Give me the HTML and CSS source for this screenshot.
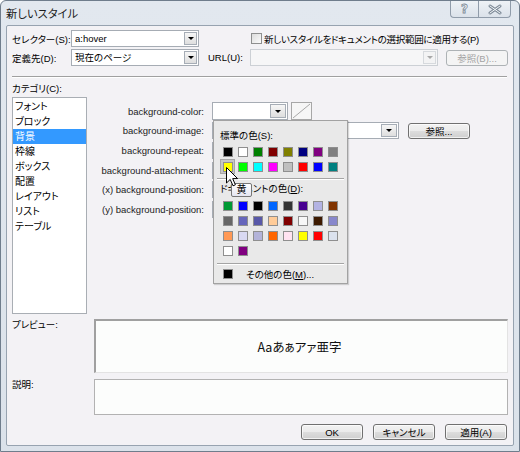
FILE: index.html
```html
<!DOCTYPE html>
<html lang="ja">
<head>
<meta charset="utf-8">
<link rel="stylesheet" href="styles.css">
</head>
<body>
<div class="win">
  <div class="titlebar">
    <span class="title">新しいスタイル</span>
    <div class="caps">
      <span class="cap help">?</span>
      <span class="cap close"><svg width="14" height="11" viewBox="0 0 14 11"><path d="M2 2 L12 9 M12 2 L2 9" stroke="#7e8b98" stroke-width="3" stroke-linecap="round"/><path d="M2 2 L12 9 M12 2 L2 9" stroke="#f4f7fa" stroke-width="1" stroke-linecap="round"/></svg></span>
    </div>
  </div>
  <div class="client">
    <div class="row r1">
      <span class="lbl">セレクター(S):</span>
      <div class="sel w128"><span class="val">a:hover</span><span class="dd"></span></div>
      <span class="chk"></span>
      <span class="chklbl">新しいスタイルをドキュメントの選択範囲に適用する(P)</span>
    </div>
    <div class="row r2">
      <span class="lbl">定義先(D):</span>
      <div class="sel w128"><span class="val">現在のページ</span><span class="dd"></span></div>
      <span class="url">URL(U):</span>
      <div class="sel dis w188"><span class="val"></span><span class="dd"></span></div>
      <span class="btn dis b62">参照(B)...</span>
    </div>
    <div class="sep"></div>
    <div class="catlbl">カテゴリ(C):</div>
    <div class="main">
      <ul class="cats">
        <li>フォント</li>
        <li>ブロック</li>
        <li class="on">背景</li>
        <li>枠線</li>
        <li>ボックス</li>
        <li>配置</li>
        <li>レイアウト</li>
        <li>リスト</li>
        <li>テーブル</li>
      </ul>
      <div class="props">
        <div class="prow"><span class="plbl">background-color:</span><div class="sel w76 h18"><span class="val"></span><span class="dd big"></span></div><span class="nonebtn"><svg width="19" height="16" viewBox="0 0 19 16"><path d="M1 15 L18 1" stroke="#a8a8a8" stroke-width="1"/></svg></span></div>
        <div class="prow"><span class="plbl">background-image:</span><div class="sel w187"><span class="val"></span><span class="dd big"></span></div><span class="btn b62 ml9">参照...</span></div>
        <div class="prow"><span class="plbl">background-repeat:</span><div class="sel w110"><span class="val"></span><span class="dd"></span></div></div>
        <div class="prow"><span class="plbl">background-attachment:</span><div class="sel w110"><span class="val"></span><span class="dd"></span></div></div>
        <div class="prow"><span class="plbl">(x) background-position:</span><div class="sel w110"><span class="val"></span><span class="dd"></span></div></div>
        <div class="prow"><span class="plbl">(y) background-position:</span><div class="sel w110"><span class="val"></span><span class="dd"></span></div></div>
      </div>
    </div>
    <div class="brow prev">
      <span class="blbl">プレビュー:</span>
      <div class="pbox"><span class="ptext">Aaあぁアァ亜字</span></div>
    </div>
    <div class="brow desc">
      <span class="blbl">説明:</span>
      <div class="dbox"></div>
    </div>
    <div class="buttons">
      <span class="btn b62">OK</span>
      <span class="btn b62">キャンセル</span>
      <span class="btn b62">適用(A)</span>
    </div>
  </div>

  <div class="popup">
    <div class="ph">標準の色(S):</div>
    <div class="grid">
      <span class="cell"><i style="background:#000000"></i></span>
      <span class="cell"><i style="background:#ffffff"></i></span>
      <span class="cell"><i style="background:#008000"></i></span>
      <span class="cell"><i style="background:#800000"></i></span>
      <span class="cell"><i style="background:#808000"></i></span>
      <span class="cell"><i style="background:#000080"></i></span>
      <span class="cell"><i style="background:#800080"></i></span>
      <span class="cell"><i style="background:#808080"></i></span>
      <span class="cell hov"><i style="background:#ffff00"></i></span>
      <span class="cell"><i style="background:#00ff00"></i></span>
      <span class="cell"><i style="background:#00ffff"></i></span>
      <span class="cell"><i style="background:#ff00ff"></i></span>
      <span class="cell"><i style="background:#c0c0c0"></i></span>
      <span class="cell"><i style="background:#ff0000"></i></span>
      <span class="cell"><i style="background:#0000ff"></i></span>
      <span class="cell"><i style="background:#008080"></i></span>
    </div>
    <div class="psep s1"></div>
    <div class="ph ph2">ドキュメントの色(<u>D</u>):</div>
    <div class="grid">
      <span class="cell"><i style="background:#009933"></i></span>
      <span class="cell"><i style="background:#0000ff"></i></span>
      <span class="cell"><i style="background:#000000"></i></span>
      <span class="cell"><i style="background:#0066ff"></i></span>
      <span class="cell"><i style="background:#333333"></i></span>
      <span class="cell"><i style="background:#470090"></i></span>
      <span class="cell"><i style="background:#b3b3e3"></i></span>
      <span class="cell"><i style="background:#803300"></i></span>
      <span class="cell"><i style="background:#666666"></i></span>
      <span class="cell"><i style="background:#6666bb"></i></span>
      <span class="cell"><i style="background:#5858a8"></i></span>
      <span class="cell"><i style="background:#ffcc99"></i></span>
      <span class="cell"><i style="background:#800000"></i></span>
      <span class="cell"><i style="background:#f7f7f7"></i></span>
      <span class="cell"><i style="background:#3d1a00"></i></span>
      <span class="cell"><i style="background:#8888cc"></i></span>
      <span class="cell"><i style="background:#ff9955"></i></span>
      <span class="cell"><i style="background:#d9d9f2"></i></span>
      <span class="cell"><i style="background:#b3b3d9"></i></span>
      <span class="cell"><i style="background:#ff6600"></i></span>
      <span class="cell"><i style="background:#ffe3f1"></i></span>
      <span class="cell"><i style="background:#ffff00"></i></span>
      <span class="cell"><i style="background:#ff0000"></i></span>
      <span class="cell"><i style="background:#dbe2ee"></i></span>
      <span class="cell"><i style="background:#ffffff"></i></span>
      <span class="cell"><i style="background:#800080"></i></span>
    </div>
    <div class="psep s2"></div>
    <div class="more"><span class="cell"><i style="background:#000000"></i></span><span class="moretxt">その他の色(<u>M</u>)...</span></div>
  </div>

  <div class="tip">黄</div>
  <svg class="cursor" width="13" height="20" viewBox="0 0 13 20"><path d="M0.5 0.5 L0.5 16 L4.2 12.4 L7 18.8 L9.4 17.8 L6.7 11.6 L11.6 11.6 Z" fill="#ffffff" stroke="#000000" stroke-width="1" stroke-linejoin="miter"/></svg>
</div>
</body>
</html>
```
FILE: styles.css
```css
* { box-sizing: border-box; }
html, body { margin: 0; padding: 0; }
body {
  width: 520px; height: 452px; overflow: hidden;
  font-family: "Liberation Sans", "Noto Sans CJK JP", sans-serif;
  font-size: 9.5px;
  font-feature-settings: "palt";
  color: #000;
  background: #ffffff;
}
.win {
  position: relative;
  width: 520px; height: 452px;
  background: linear-gradient(#e2e8ef, #dbe2ea);
  border: 1px solid #6f7d8c;
  border-radius: 6px 6px 0 0;
  display: flex; flex-direction: column;
}
.titlebar {
  height: 24px;
  display: flex;
  align-items: center;
  padding-left: 5px;
  position: relative;
}
.title { font-family: "Noto Sans CJK JP", sans-serif; font-size: 11.3px; color: #1b1b1b; }
.caps {
  margin-left: auto; margin-right: 8px;
  align-self: flex-start;
  display: flex;
}
.cap {
  height: 17px;
  display: flex; align-items: center; justify-content: center;
  border: 1px solid #909caa; border-top: none;
  background: linear-gradient(#eef2f6, #dbe2ea);
}
.help { width: 28px; border-radius: 0 0 0 4px; border-right: none;
  font-family: "DejaVu Sans", sans-serif; font-size: 12px; font-weight: bold;
  color: #f5f7fa; -webkit-text-stroke: 0.8px #7e8b98; }
.close { width: 33px; border-radius: 0 0 4px 0; }
.client {
  flex: 1;
  margin: 0 5px 5px 5px;
  border: 1px solid #97a3b0;
  border-radius: 2px;
  background: #f3f2f5;
  padding-left: 5px;
  position: relative;
}
.row { display: flex; align-items: center; height: 17px; }
.r1 { margin-top: 4px; }
.r2 { margin-top: 2px; }
.lbl { width: 59px; white-space: nowrap; }
.sel {
  display: flex; align-items: center;
  height: 17px;
  border: 1px solid #a6acb4;
  background: #ffffff;
  padding: 1px;
}
.sel .val { flex: 1; padding-left: 2px; white-space: nowrap; line-height: 13px; }
.sel .dd {
  width: 13px; height: 100%;
  border: 1px solid #a6adb6;
  background: linear-gradient(#f6f6f6, #dedede);
  display: flex; align-items: center; justify-content: center;
}
.sel .dd::after {
  content: ""; width: 0; height: 0;
  border-left: 3px solid transparent; border-right: 3px solid transparent;
  border-top: 3px solid #000;
}
.sel .dd.big { width: 16px; }
.sel.dis { border-color: #ccd0d5; background: #f6f6f7; }
.sel.dis .dd { border-color: #d6d9dd; background: #f3f3f4; }
.sel.dis .dd::after { border-top-color: #a8a8a8; }
.w128 { width: 128px; }
.w188 { width: 188px; margin-left: 0; }
.w76 { width: 76px; }
.w187 { width: 187px; }
.w110 { width: 110px; }
.h18 { height: 18px; }
.chk {
  width: 11px; height: 11px; margin-left: 52px;
  border: 1px solid #8e8f8f;
  background: linear-gradient(135deg, #dcdcdc, #fbfbfb);
}
.chklbl { margin-left: 2px; white-space: nowrap; letter-spacing: -0.3px; }
.url { margin-left: 9px; width: 42px; }
.btn {
  height: 16px;
  display: flex; align-items: center; justify-content: center;
  border: 1px solid #707070;
  border-radius: 3px;
  background: linear-gradient(#f2f2f2 0%, #ebebeb 50%, #dddddd 51%, #cfcfcf 100%);
  box-shadow: inset 0 0 0 1px rgba(255,255,255,0.7);
  white-space: nowrap;
}
.b62 { width: 62px; }
.ml9 { margin-left: 9px; }
.btn.dis { margin-left: 8px; color: #a3a3a3; border-color: #adb2b5; background: #f4f4f4; box-shadow: none; }
.sep {
  margin-top: 10px; width: 495px; height: 2px;
  border-top: 1px solid #a0a0a0; border-bottom: 1px solid #ffffff;
}
.catlbl { margin-top: 5px; line-height: 12px; height: 12px; margin-bottom: 2px; }
.main { display: flex; height: 217px; }
.cats {
  list-style: none; margin: 0;
  width: 75px; height: 217px;
  border: 1px solid #a9aeb4;
  background: #ffffff;
  padding: 1px 0 0 0;
}
.cats li { height: 15px; line-height: 15px; padding-left: 2px; font-size: 10px; }
.cats li.on { background: #3399ff; color: #ffffff; }
.props { flex: 1; padding-top: 4.5px; }
.prow { display: flex; align-items: center; height: 19.6px; }
.plbl { width: 117px; text-align: right; margin-right: 8px; white-space: nowrap; color: #222; }
.nonebtn {
  margin-left: 3px; width: 21px; height: 18px;
  border: 1px solid #a7a7a7; background: #f6f6f6;
  display: flex;
}
.brow { display: flex; }
.prev { margin-top: 5px; }
.desc { margin-top: 6px; }
.blbl { width: 82px; line-height: 12px; }
.pbox {
  width: 414px; height: 54px;
  border: 2px solid #a0a0a0; border-right: 1px solid #e3e3e3; border-bottom: 1px solid #e3e3e3;
  background: #fcfdfc;
  display: flex; align-items: center; justify-content: center;
}
.ptext { font-family: "Noto Sans CJK JP", sans-serif; font-size: 12.5px; color: #111; padding-right: 4px; }
.dbox { width: 414px; height: 36px; border: 1px solid #b2b2b2; background: #fcfdfc; }
.buttons {
  margin-top: 9px;
  display: flex; justify-content: flex-end; gap: 10px;
  padding-right: 6px;
}

/* colour dropdown */
.popup {
  position: absolute; left: 212px; top: 119px;
  width: 135px; height: 164px;
  border: 1px solid #a2a2a2;
  background: #e9e9e9;
  padding: 0 4px 0 6px;
  box-shadow: 1px 1px 1px rgba(0,0,0,0.15);
}
.ph { padding-top: 9px; line-height: 12px; height: 21px; margin-bottom: 2px; white-space: nowrap; }
.ph2 { padding-top: 3px; height: 15px; margin-bottom: 3px; }
.ph u, .more u { text-decoration: underline; }
.grid { display: grid; grid-template-columns: repeat(8, 15px); grid-auto-rows: 15px; }
.cell { width: 15px; height: 15px; display: flex; align-items: center; justify-content: center; }
.cell i { display: block; width: 10px; height: 10px; border: 1px solid #8f8f8f; }
.cell.hov { background: #c6c6c6; border: 1px solid #a6a6a6; }
.psep { height: 2px; margin-left: -3px; margin-right: -1px; border-top: 1px solid #a4a4a4; border-bottom: 1px solid #ffffff; }
.s1 { margin-top: 4px; }
.s2 { margin-top: 5px; }
.more { display: flex; align-items: center; height: 18px; }
.moretxt { margin-left: 11px; }

.tip {
  position: absolute; left: 230px; top: 182px;
  width: 21px; height: 14px;
  border: 1px solid #767676; border-radius: 2px;
  background: linear-gradient(#ffffff, #e4e5f0);
  display: flex; align-items: center; justify-content: center;
  font-size: 10px; line-height: 10px;
}
.cursor { position: absolute; left: 225px; top: 166px; }
```
